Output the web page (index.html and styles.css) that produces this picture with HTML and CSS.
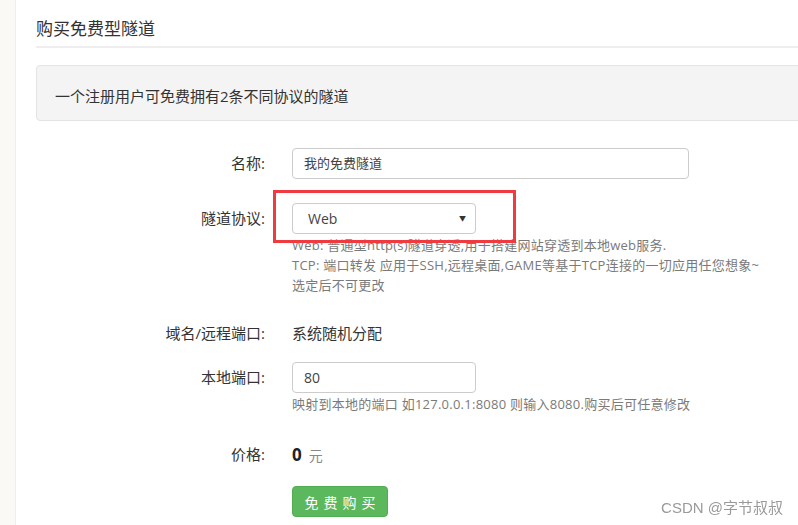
FILE: index.html
```html
<!DOCTYPE html>
<html lang="zh-CN">
<head>
    <meta charset="UTF-8">
    <meta name="viewport" content="width=device-width, initial-scale=1.0">
    <title>购买免费型隧道</title>
    <link rel="stylesheet" href="styles.css">
</head>
<body>
    <div class="page">
        <div class="side"></div>

        <div class="main">
            <h3 class="page-title">购买免费型隧道</h3>

            <div class="well">一个注册用户可免费拥有2条不同协议的隧道</div>

            <div class="form">
                <div class="row row-name">
                    <label class="label">名称:</label>
                    <div class="field">
                        <div class="input input-wide">我的免费隧道</div>
                    </div>
                </div>

                <div class="row row-proto">
                    <label class="label">隧道协议:</label>
                    <div class="field">
                        <div class="mark">
                            <div class="select">
                                <span>Web</span>
                                <span class="caret">▼</span>
                            </div>
                            <div class="highlight"></div>
                        </div>
                        <div class="help">
                            <div>Web: 普通型http(s)隧道穿透,用于搭建网站穿透到本地web服务.</div>
                            <div>TCP: 端口转发 应用于SSH,远程桌面,GAME等基于TCP连接的一切应用任您想象~</div>
                            <div>选定后不可更改</div>
                        </div>
                    </div>
                </div>

                <div class="row row-domain">
                    <label class="label">域名/远程端口:</label>
                    <div class="field">
                        <div class="static">系统随机分配</div>
                    </div>
                </div>

                <div class="row row-port">
                    <label class="label">本地端口:</label>
                    <div class="field">
                        <div class="input input-short">80</div>
                        <div class="help">映射到本地的端口 如127.0.0.1:8080 则输入8080.购买后可任意修改</div>
                    </div>
                </div>

                <div class="row row-price">
                    <label class="label">价格:</label>
                    <div class="field">
                        <div class="static"><b class="price">0</b> <span class="unit">元</span></div>
                    </div>
                </div>

                <div class="row row-submit">
                    <div class="label"></div>
                    <div class="field">
                        <button class="btn">免费购买</button>
                    </div>
                </div>
            </div>
        </div>
    </div>

    <div class="watermark">CSDN @字节叔叔</div>
</body>
</html>
```

FILE: styles.css
```css
* {
    margin: 0;
    padding: 0;
    box-sizing: border-box;
}

body {
    background: #ffffff;
    color: #333333;
    font-family: "Open Sans", "Noto Sans CJK SC", sans-serif;
    font-size: 15px;
    overflow: hidden;
    height: 100vh;
}

.page {
    display: flex;
    min-height: 100vh;
}

.side {
    width: 16px;
    flex-shrink: 0;
    background: #faf9f6;
    border-right: 1px solid #efeeea;
}

.main {
    flex: 1;
    padding-left: 20px;
    margin-right: -12px;
}

.page-title {
    font-size: 17px;
    font-weight: normal;
    line-height: 24px;
    padding-top: 17px;
    padding-bottom: 5px;
    border-bottom: 2px solid #eeeeee;
}

.well {
    margin-top: 17px;
    background: #f4f4f4;
    border: 1px solid #e4e4e4;
    border-radius: 4px;
    padding: 20px 18px 14px;
    line-height: 20px;
    font-size: 15px;
}

.form {
    padding-top: 27px;
}

.row {
    display: grid;
    grid-template-columns: 229px 1fr;
    column-gap: 27px;
}

.label {
    text-align: right;
    height: 31px;
    line-height: 31px;
    font-size: 15px;
}

.field {
    min-width: 0;
}

.input,
.select {
    height: 31px;
    line-height: 29px;
    border: 1px solid #cccccc;
    border-radius: 4px;
    font-size: 13px;
    padding: 0 11px;
    color: #444;
}

.input-wide {
    width: 397px;
}

.input-short {
    width: 184px;
    font-size: 14px;
}

.row-proto {
    margin-top: 24px;
}

.mark {
    position: relative;
    width: 184px;
}

.select {
    display: flex;
    justify-content: space-between;
    align-items: center;
    font-size: 14px;
    padding: 0 9px 0 15px;
}

.caret {
    font-size: 7px;
    color: #333;
}

.highlight {
    position: absolute;
    top: -13px;
    left: -19px;
    width: 243px;
    height: 53px;
    border: 3px solid #ef3b40;
    pointer-events: none;
}

.help {
    margin-top: 1px;
    font-size: 13px;
    letter-spacing: 0.25px;
    line-height: 20px;
    color: #7a7a7a;
    white-space: nowrap;
}

.row-domain {
    margin-top: 23px;
}

.static {
    height: 31px;
    line-height: 31px;
    font-size: 15px;
}

.row-port {
    margin-top: 13px;
}

.row-price {
    margin-top: 25px;
}

.price {
    font-size: 17px;
    font-weight: bold;
    color: #222;
}

.unit {
    color: #888;
    font-size: 14px;
    margin-left: 3px;
}

.row-submit {
    margin-top: 16px;
}

.btn {
    width: 96px;
    height: 31px;
    background: #5cb85c;
    border: 1px solid #52ad52;
    border-radius: 4px;
    color: #ffffff;
    font-family: "Open Sans", "Noto Sans CJK SC", sans-serif;
    font-size: 14px;
    letter-spacing: 5px;
    padding-left: 5px;
}

.watermark {
    position: fixed;
    right: 15px;
    bottom: 8px;
    font-family: "Liberation Sans", "Noto Sans CJK SC", sans-serif;
    font-size: 15px;
    color: #9a9a9a;
}
```
